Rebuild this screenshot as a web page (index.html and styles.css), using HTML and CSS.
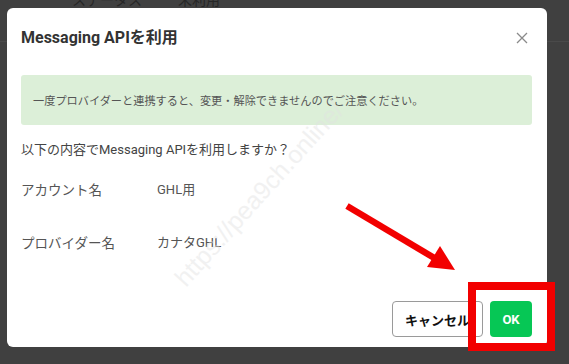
FILE: index.html
```html
<!DOCTYPE html>
<html lang="ja">
<head>
<meta charset="utf-8">
<title>Messaging APIを利用</title>
<link rel="stylesheet" href="styles.css">
</head>
<body>
<div class="page">
  <div class="bg-row">
    <span class="bg-label">ステータス</span>
    <span class="bg-value">未利用</span>
  </div>
  <div class="bg-line"></div>
</div>

<div class="modal">
  <div class="modal-header">
    <h1 class="modal-title">Messaging APIを利用</h1>
    <svg class="close" width="12" height="12" viewBox="0 0 12 12"><path d="M1 1 L11 11 M11 1 L1 11" stroke="#8a8a8a" stroke-width="1.3" fill="none"/></svg>
  </div>
  <div class="notice">一度プロバイダーと連携すると、変更・解除できませんのでご注意ください。</div>
  <p class="question">以下の内容でMessaging APIを利用しますか？</p>
  <div class="info">
    <div class="info-row"><span class="info-label">アカウント名</span><span class="info-value">GHL用</span></div>
    <div class="info-row"><span class="info-label">プロバイダー名</span><span class="info-value">カナタGHL</span></div>
  </div>
  <div class="modal-footer">
    <button class="btn btn-cancel">キャンセル</button>
    <button class="btn btn-ok">OK</button>
  </div>
</div>

<svg class="annot" width="569" height="364" viewBox="0 0 569 364">
  <text class="watermark" x="0" y="0" transform="translate(186 288) rotate(-48)">https://pea9ch.online/</text>
  <line x1="347" y1="206" x2="436" y2="259" stroke="#f20000" stroke-width="6.5"/>
  <polygon points="455,270 427,267 440,246" fill="#f20000"/>
</svg>
<div class="highlight"></div>
</body>
</html>
```
FILE: styles.css
```css
html, body {
  margin: 0;
  padding: 0;
}
body {
  width: 569px;
  height: 364px;
  overflow: hidden;
  background: #404040;
  font-family: "Roboto", "Noto Sans CJK JP", sans-serif;
  position: relative;
}
.page {
  height: 364px;
}
.bg-row {
  display: flex;
  gap: 36px;
  padding-left: 72px;
  margin-top: -9px;
  font-size: 14px;
  line-height: 18px;
  color: #262626;
}
.bg-line {
  margin-top: 32px;
  height: 1px;
  background: #4a4a4a;
}
.modal {
  position: absolute;
  left: 7px;
  top: 8px;
  width: 540px;
  height: 339px;
  background: #fff;
  border-radius: 6px;
  box-sizing: border-box;
  padding: 0 15px 10px 14px;
  display: flex;
  flex-direction: column;
}
.modal-header {
  display: flex;
  align-items: center;
  justify-content: space-between;
  height: 60px;
  padding-bottom: 1px;
  box-sizing: border-box;
}
.modal-title {
  margin: 0;
  font-size: 16px;
  font-weight: 700;
  color: #333;
  line-height: 20px;
}
.close {
  margin-right: 4px;
}
.notice {
  margin-top: 7px;
  height: 50px;
  background: #dcefd8;
  border-radius: 3px;
  padding-left: 12px;
  display: flex;
  align-items: center;
  font-size: 11.2px;
  color: #555;
}
.question {
  margin: 15px 0 0;
  font-size: 13px;
  line-height: 20px;
  color: #444;
}
.info {
  display: flex;
  flex-direction: column;
  margin-top: 20px;
  gap: 33px;
}
.info-row {
  display: flex;
  align-items: center;
  line-height: 20px;
  color: #555;
}
.info-label {
  width: 136px;
  font-size: 13.5px;
}
.info-value {
  font-size: 13px;
}
.modal-footer {
  margin-top: auto;
  display: flex;
  justify-content: flex-end;
  gap: 7px;
}
.btn {
  height: 36px;
  border-radius: 4px;
  font-family: "Roboto", "Noto Sans CJK JP", sans-serif;
  font-weight: 700;
  padding: 0;
  cursor: pointer;
}
.btn-cancel {
  width: 91px;
  background: #fff;
  border: 1px solid #9a9a9a;
  color: #111;
  font-size: 13px;
}
.btn-ok {
  width: 42px;
  background: #06c755;
  border: none;
  color: #fff;
  font-size: 13px;
}
.annot {
  position: absolute;
  left: 0;
  top: 0;
  pointer-events: none;
}
.watermark {
  font-family: "Liberation Sans", sans-serif;
  font-size: 25px;
  fill: #e2e2e2;
  opacity: 0.45;
}
.highlight {
  position: absolute;
  left: 468px;
  top: 282px;
  width: 87px;
  height: 69px;
  box-sizing: border-box;
  border: 8px solid #f20000;
}
```
